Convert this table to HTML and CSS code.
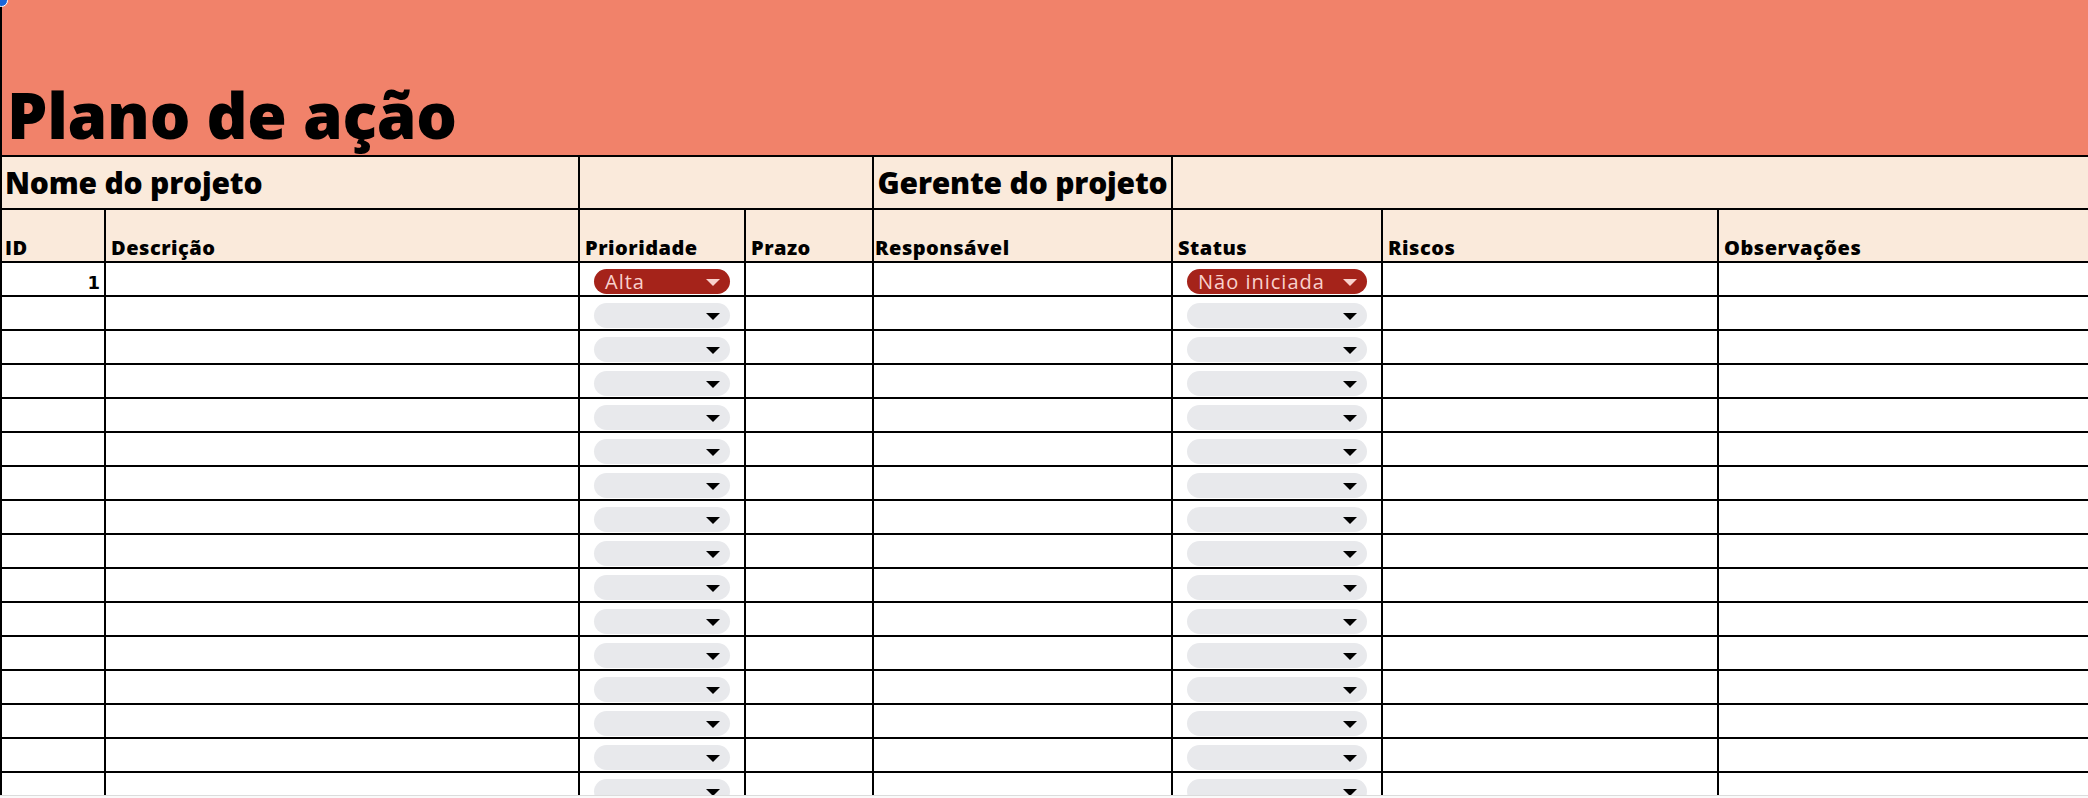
FILE: index.html
```html
<!DOCTYPE html>
<html lang="pt-BR">
<head>
<meta charset="utf-8">
<title>Plano de ação</title>
<link rel="stylesheet" href="styles.css">
</head>
<body>
<div class="sheet">
  <header class="banner">
    <h1 class="title">Plano de ação</h1>
  </header>
  <div class="grid">
    <div class="cell meta span-2"><span class="meta-label">Nome do projeto</span></div>
    <div class="cell meta span-2"></div>
    <div class="cell meta meta-center"><span class="meta-label">Gerente do projeto</span></div>
    <div class="cell meta span-3"></div>

    <div class="cell head head-id">ID</div>
    <div class="cell head">Descrição</div>
    <div class="cell head">Prioridade</div>
    <div class="cell head">Prazo</div>
    <div class="cell head head-tight">Responsável</div>
    <div class="cell head">Status</div>
    <div class="cell head">Riscos</div>
    <div class="cell head">Observações</div>
  </div>
  <div class="grid rows" id="rows">
    <div class="cell num">1</div>
    <div class="cell"></div>
    <div class="cell pick"><div class="pill pill-red"><span class="pill-text">Alta</span><span class="caret"></span></div></div>
    <div class="cell"></div>
    <div class="cell"></div>
    <div class="cell pick"><div class="pill pill-red"><span class="pill-text">Não iniciada</span><span class="caret"></span></div></div>
    <div class="cell"></div>
    <div class="cell"></div>

    <div class="cell num"></div><div class="cell"></div>
    <div class="cell pick"><div class="pill"><span class="pill-text"></span><span class="caret"></span></div></div>
    <div class="cell"></div><div class="cell"></div>
    <div class="cell pick"><div class="pill"><span class="pill-text"></span><span class="caret"></span></div></div>
    <div class="cell"></div><div class="cell"></div>

    <div class="cell num"></div><div class="cell"></div>
    <div class="cell pick"><div class="pill"><span class="pill-text"></span><span class="caret"></span></div></div>
    <div class="cell"></div><div class="cell"></div>
    <div class="cell pick"><div class="pill"><span class="pill-text"></span><span class="caret"></span></div></div>
    <div class="cell"></div><div class="cell"></div>

    <div class="cell num"></div><div class="cell"></div>
    <div class="cell pick"><div class="pill"><span class="pill-text"></span><span class="caret"></span></div></div>
    <div class="cell"></div><div class="cell"></div>
    <div class="cell pick"><div class="pill"><span class="pill-text"></span><span class="caret"></span></div></div>
    <div class="cell"></div><div class="cell"></div>

    <div class="cell num"></div><div class="cell"></div>
    <div class="cell pick"><div class="pill"><span class="pill-text"></span><span class="caret"></span></div></div>
    <div class="cell"></div><div class="cell"></div>
    <div class="cell pick"><div class="pill"><span class="pill-text"></span><span class="caret"></span></div></div>
    <div class="cell"></div><div class="cell"></div>

    <div class="cell num"></div><div class="cell"></div>
    <div class="cell pick"><div class="pill"><span class="pill-text"></span><span class="caret"></span></div></div>
    <div class="cell"></div><div class="cell"></div>
    <div class="cell pick"><div class="pill"><span class="pill-text"></span><span class="caret"></span></div></div>
    <div class="cell"></div><div class="cell"></div>

    <div class="cell num"></div><div class="cell"></div>
    <div class="cell pick"><div class="pill"><span class="pill-text"></span><span class="caret"></span></div></div>
    <div class="cell"></div><div class="cell"></div>
    <div class="cell pick"><div class="pill"><span class="pill-text"></span><span class="caret"></span></div></div>
    <div class="cell"></div><div class="cell"></div>

    <div class="cell num"></div><div class="cell"></div>
    <div class="cell pick"><div class="pill"><span class="pill-text"></span><span class="caret"></span></div></div>
    <div class="cell"></div><div class="cell"></div>
    <div class="cell pick"><div class="pill"><span class="pill-text"></span><span class="caret"></span></div></div>
    <div class="cell"></div><div class="cell"></div>

    <div class="cell num"></div><div class="cell"></div>
    <div class="cell pick"><div class="pill"><span class="pill-text"></span><span class="caret"></span></div></div>
    <div class="cell"></div><div class="cell"></div>
    <div class="cell pick"><div class="pill"><span class="pill-text"></span><span class="caret"></span></div></div>
    <div class="cell"></div><div class="cell"></div>

    <div class="cell num"></div><div class="cell"></div>
    <div class="cell pick"><div class="pill"><span class="pill-text"></span><span class="caret"></span></div></div>
    <div class="cell"></div><div class="cell"></div>
    <div class="cell pick"><div class="pill"><span class="pill-text"></span><span class="caret"></span></div></div>
    <div class="cell"></div><div class="cell"></div>

    <div class="cell num"></div><div class="cell"></div>
    <div class="cell pick"><div class="pill"><span class="pill-text"></span><span class="caret"></span></div></div>
    <div class="cell"></div><div class="cell"></div>
    <div class="cell pick"><div class="pill"><span class="pill-text"></span><span class="caret"></span></div></div>
    <div class="cell"></div><div class="cell"></div>

    <div class="cell num"></div><div class="cell"></div>
    <div class="cell pick"><div class="pill"><span class="pill-text"></span><span class="caret"></span></div></div>
    <div class="cell"></div><div class="cell"></div>
    <div class="cell pick"><div class="pill"><span class="pill-text"></span><span class="caret"></span></div></div>
    <div class="cell"></div><div class="cell"></div>

    <div class="cell num"></div><div class="cell"></div>
    <div class="cell pick"><div class="pill"><span class="pill-text"></span><span class="caret"></span></div></div>
    <div class="cell"></div><div class="cell"></div>
    <div class="cell pick"><div class="pill"><span class="pill-text"></span><span class="caret"></span></div></div>
    <div class="cell"></div><div class="cell"></div>

    <div class="cell num"></div><div class="cell"></div>
    <div class="cell pick"><div class="pill"><span class="pill-text"></span><span class="caret"></span></div></div>
    <div class="cell"></div><div class="cell"></div>
    <div class="cell pick"><div class="pill"><span class="pill-text"></span><span class="caret"></span></div></div>
    <div class="cell"></div><div class="cell"></div>

    <div class="cell num"></div><div class="cell"></div>
    <div class="cell pick"><div class="pill"><span class="pill-text"></span><span class="caret"></span></div></div>
    <div class="cell"></div><div class="cell"></div>
    <div class="cell pick"><div class="pill"><span class="pill-text"></span><span class="caret"></span></div></div>
    <div class="cell"></div><div class="cell"></div>

    <div class="cell num"></div><div class="cell"></div>
    <div class="cell pick"><div class="pill"><span class="pill-text"></span><span class="caret"></span></div></div>
    <div class="cell"></div><div class="cell"></div>
    <div class="cell pick"><div class="pill"><span class="pill-text"></span><span class="caret"></span></div></div>
    <div class="cell"></div><div class="cell"></div>
  </div>
</div>
<span class="handle"></span>
<div class="hscroll"></div>
</body>
</html>
```

FILE: styles.css
```css
html, body {
  margin: 0;
  padding: 0;
  height: 100%;
  overflow: hidden;
  background: #ffffff;
}

body {
  font-family: "Open Sans", "Liberation Sans", sans-serif;
  color: #000000;
}

.sheet {
  border-left: 2px solid #000000;
  min-height: 100%;
  overflow: hidden;
}

.banner {
  height: 157px;
  box-sizing: border-box;
  background: #f1826a;
  border-bottom: 2px solid #000000;
  display: flex;
  align-items: flex-end;
  padding: 0 0 8px 5px;
}

.title {
  margin: 0;
  font-size: 64px;
  line-height: 64px;
  font-weight: 800;
  letter-spacing: -0.3px;
}

.grid {
  display: grid;
  grid-template-columns: 104px 474px 166px 128px 299px 210px 336px 420px;
  grid-template-rows: 53px 53px;
  width: max-content;
}

.grid.rows {
  grid-template-rows: none;
  grid-auto-rows: 34px;
}

.cell {
  box-sizing: border-box;
  border-right: 2px solid #000000;
  border-bottom: 2px solid #000000;
  display: flex;
  min-width: 0;
  overflow: hidden;
  white-space: nowrap;
}

.span-2 { grid-column: span 2; }
.span-3 { grid-column: span 3; }

.meta {
  background: #faeadb;
  align-items: center;
  padding-left: 3px;
}

.meta-center {
  justify-content: center;
  padding-left: 0;
}

.meta-label {
  font-size: 30px;
  font-weight: 800;
  letter-spacing: -0.2px;
}

.head {
  background: #faeadb;
  align-items: flex-end;
  padding: 0 0 3px 5px;
  font-size: 20px;
  line-height: 20px;
  font-weight: 800;
  letter-spacing: 0.5px;
}

.head-id { padding-left: 3px; }
.head-tight { padding-left: 1px; }

.num {
  justify-content: flex-end;
  align-items: flex-end;
  padding: 0 4px 1px 0;
  font-family: "DejaVu Sans", "Open Sans", sans-serif;
  font-size: 18px;
  line-height: 22px;
  font-weight: 700;
}

.pick {
  align-items: flex-end;
  padding: 0 14px 1px 14px;
}

.pill {
  flex: 1;
  height: 25px;
  border-radius: 13px;
  background: #e8e9ec;
  display: flex;
  align-items: center;
  justify-content: space-between;
  padding: 0 10px 0 11px;
}

.pill-text {
  font-size: 20px;
  line-height: 25px;
  font-weight: 500;
  letter-spacing: 1px;
}

.pill-red {
  background: #a5231a;
  color: #f9d1cc;
}

.caret {
  width: 0;
  height: 0;
  border-left: 7px solid transparent;
  border-right: 7px solid transparent;
  border-top: 7px solid #000000;
  margin-top: 1px;
}

.pill-red .caret {
  border-top-color: #f9d1cc;
}

.handle {
  position: fixed;
  left: -5px;
  top: -6px;
  width: 11px;
  height: 11px;
  border-radius: 50%;
  background: #1a66d8;
  border: 1px solid #ffffff;
}

.hscroll {
  position: fixed;
  left: 0;
  right: 0;
  bottom: 0;
  height: 2px;
  background: #fafafa;
  border-top: 1px solid #dcdcdc;
}
```
